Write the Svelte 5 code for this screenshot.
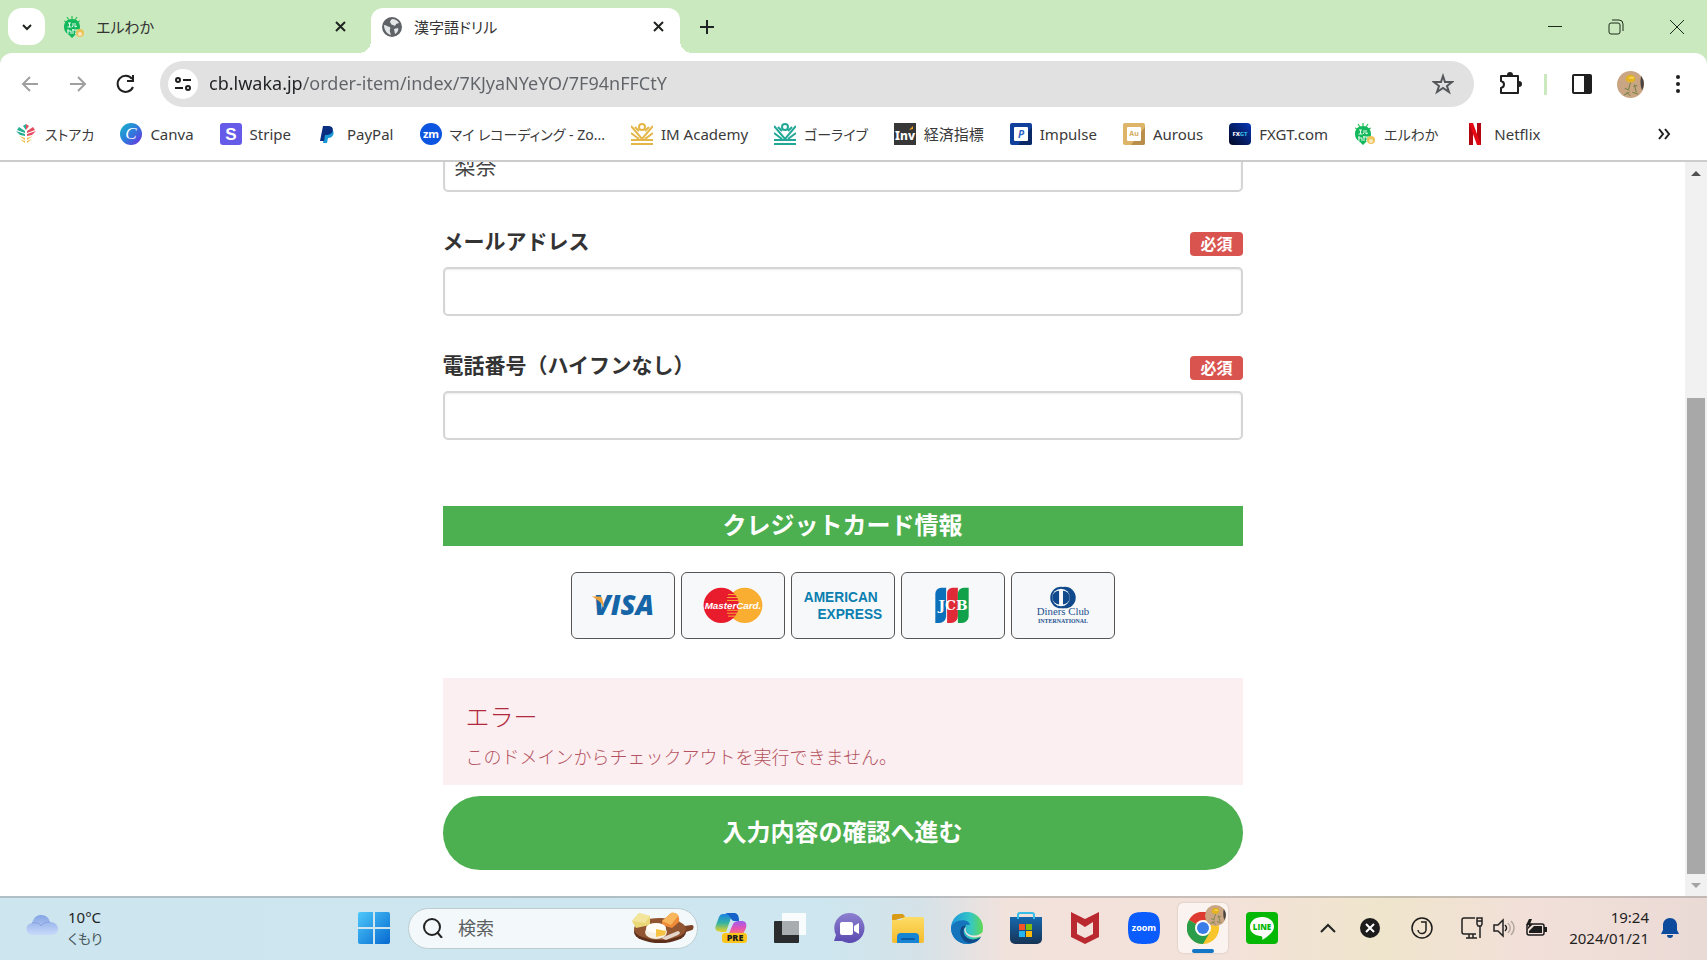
<script lang="ts">
	const tabs = [
		{ title: 'エルわか', icon: 'lwaka', active: false },
		{ title: '漢字語ドリル', icon: 'globe', active: true }
	];

	const bookmarks = [
		{ label: 'ストアカ', icon: 'street', kana: true },
		{ label: 'Canva', icon: 'canva' },
		{ label: 'Stripe', icon: 'stripe' },
		{ label: 'PayPal', icon: 'paypal' },
		{ label: 'マイ レコーディング - Zo...', icon: 'zm', kana: true },
		{ label: 'IM Academy', icon: 'crown-gold' },
		{ label: 'ゴーライブ', icon: 'crown-teal', kana: true },
		{ label: '経済指標', icon: 'inv' },
		{ label: 'Impulse', icon: 'impulse' },
		{ label: 'Aurous', icon: 'aurous' },
		{ label: 'FXGT.com', icon: 'fxgt' },
		{ label: 'エルわか', icon: 'lwaka', kana: true },
		{ label: 'Netflix', icon: 'netflix' }
	];

	const apps = [
		{ name: 'Copilot', icon: 'copilot' },
		{ name: 'タスク ビュー', icon: 'taskview' },
		{ name: 'チャット', icon: 'chat' },
		{ name: 'エクスプローラー', icon: 'folder' },
		{ name: 'Edge', icon: 'edge' },
		{ name: 'Microsoft Store', icon: 'store' },
		{ name: 'McAfee', icon: 'mcafee' },
		{ name: 'Zoom', icon: 'zoom' },
		{ name: 'Chrome', icon: 'chrome', active: true },
		{ name: 'LINE', icon: 'line' }
	];

	const cards = ['visa', 'mastercard', 'amex', 'jcb', 'diners'];

	let firstName = $state('梨奈');
	let fields = $state([
		{ id: 'email', label: 'メールアドレス', type: 'email', value: '' },
		{ id: 'tel', label: '電話番号（ハイフンなし）', type: 'tel', value: '' }
	]);

	let url = $state('cb.lwaka.jp/order-item/index/7KJyaNYeYO/7F94nFFCtY');
	let query = $state('');
</script>

{#snippet favicon(name: string)}
	<svg class="favicon" viewBox="0 0 22 22" aria-hidden="true">
		{#if name === 'lwaka'}
			<path d="M4 1l2 3M9 0v3M14 1l-2 3M1 5l3 1M17 5l-3 1" stroke="#35c45e" stroke-width="1.3" />
			<path d="M9 3c5 0 8 3 8 8 0 4-3 6-5 8l-3 3-3-3c-3-2-5-4-5-8 0-5 3-8 8-8z" fill="#12b85b" />
			<path d="M5 7h3M6.500 7v4M4.500 11h4M10 7v3l-1 1M12 7v4l2-1M5 13v5M4 15h4v3M10 13v5M9 14h4v3l-1 1M14 13v2" fill="none" stroke="#e6faec" />
			<circle cx="17" cy="17" r="4" fill="#edc45a" />
			<circle cx="17" cy="18" r="2" fill="#f9e7bd" />
		{:else if name === 'globe'}
			<circle cx="11" cy="11" r="10" fill="#5f6368" />
			<path d="M3 9c2 0 4 2 6 2 1 2-1 3 0 5l1 3c-4-1-7-5-7-10zM11 3c3 0 5 1 7 4l-3 1c0 2-2 2-3 1-2 0-2-2-3-3 0-1 1-2 2-3zM13 13l4-1c1 2-1 5-3 6z" fill="#e4e6e8" />
		{:else if name === 'street'}
			<path d="M1 8l9 3v2L5 12zM4 4l6 4v2L2 7z" fill="#25ae93" />
			<path d="M21 8l-9 3v2l5-1zM18 4l-6 4v2l8-3z" fill="#e44d60" />
			<path d="M4 13l6 2v2zM18 13l-6 2v2zM5 16l5 2v2zM17 16l-5 2v2z" fill="#efba45" />
			<path d="M11 1l3 2-3 4z" fill="#e44d60" />
			<path d="M11 1L8 3l3 4z" fill="#25ae93" />
		{:else if name === 'canva'}
			<circle cx="11" cy="11" r="11" fill="url(#canvaFill)" />
			<text x="11" y="16" class="serif" font-size="17" font-style="italic" fill="#fff" text-anchor="middle">C</text>
		{:else if name === 'stripe'}
			<rect width="22" height="22" rx="3" fill="#665be8" />
			<text x="11" y="17" class="arial" font-size="17" font-weight="700" fill="#fff" text-anchor="middle">S</text>
		{:else if name === 'paypal'}
			<path d="M8 7h7c3 1 2 8-4 8l-1 5H6z" fill="#1998d8" />
			<path d="M6 3h6c6 0 5 9-2 9H8l-1 6H3z" fill="#0b2f80" />
		{:else if name === 'zm'}
			<circle cx="11" cy="11" r="11" fill="#0b55e0" />
			<text x="11" y="15" font-size="11" font-weight="700" fill="#fff" text-anchor="middle">zm</text>
		{:else if name.startsWith('crown')}
			<g fill="none" stroke={name === 'crown-gold' ? '#e4b647' : '#22a797'} stroke-width="2">
				<path d="M0 17h22M0 21h22" />
				<path d="M0 10l8 6M22 10l-8 6M0 3l11 13L22 3M4 4l4 4M18 4l-4 4" />
				<circle cx="11" cy="4" r="3" />
			</g>
		{:else if name === 'inv'}
			<rect width="22" height="22" fill="#373737" />
			<text x="11" y="17" font-size="12" font-weight="800" fill="#fff" text-anchor="middle">Inv</text>
			<path d="M15 7l4-4v3z" fill="#f6a318" />
		{:else if name === 'impulse'}
			<rect width="22" height="22" rx="2" fill="#103f9c" />
			<path d="M22 4v16a2 2 0 0 1-2 2H8z" fill="#0b2867" />
			<rect x="4" y="4" width="14" height="14" rx="1" fill="#fff" />
			<text x="11" y="15" font-size="10" font-style="italic" font-weight="700" fill="#2c62c4" text-anchor="middle">P</text>
		{:else if name === 'aurous'}
			<rect width="22" height="22" rx="2" fill="#dcb568" />
			<path d="M22 4v16a2 2 0 0 1-2 2H8z" fill="#b98e4a" />
			<rect x="4" y="4" width="14" height="14" rx="1" fill="#fff" />
			<text x="11" y="13" font-size="7" font-weight="700" fill="#d2ad62" text-anchor="middle">Au</text>
		{:else if name === 'fxgt'}
			<rect width="22" height="22" rx="4" fill="url(#fxgtFill)" />
			<text x="11" y="13" font-size="6" font-weight="800" fill="#fff" text-anchor="middle">FX<tspan fill="#30b7df">GT</tspan></text>
		{:else if name === 'netflix'}
			<path d="M5 0h4v22H5zM13 0h4v22h-4z" fill="#b20710" />
			<path d="M5 0h4l8 22h-4z" fill="#e50914" />
		{/if}
	</svg>
{/snippet}

{#snippet appIcon(name: string)}
	<svg width="32" height="32" viewBox="0 0 32 32" aria-hidden="true">
		{#if name === 'copilot'}
			<path d="M8 2h11c3 0 4 2 5 6l-8-2-5 14H6c-4 0-7-2-5-7L4 5c1-2 2-3 4-3z" fill="url(#coLeft)" />
			<path d="M24 9h3c4 0 5 3 4 7l-3 6c-1 2-2 2-4 2H10c3 0 4-2 5-5l3-7c1-2 3-3 6-3z" fill="url(#coRight)" />
			<path d="M10 1h9c3 0 5 2 5 8h-5c-3 0-4-7-9-8z" fill="#1762c8" />
			<rect x="7" y="21" width="25" height="10" rx="3" fill="#fcc51d" />
			<text x="20" y="29" font-size="9" font-weight="800" fill="#1c1c1c" text-anchor="middle">PRE</text>
		{:else if name === 'taskview'}
			<rect x="0" y="9" width="25" height="22" rx="1" fill="#2a2c2e" />
			<rect x="8" y="1" width="24" height="22" rx="1" fill="#fff" opacity="0.85" />
			<rect x="8" y="9" width="17" height="14" fill="#a8adb0" />
		{:else if name === 'chat'}
			<path d="M16 1a15 15 0 1 1-7 28H1l2-6A15 15 0 0 1 16 1z" fill="url(#chatFill)" />
			<rect x="7" y="10" width="13" height="13" rx="2" fill="#fff" />
			<path d="M21 14l5-3v11l-5-3z" fill="#fff" />
		{:else if name === 'folder'}
			<path d="M0 4a2 2 0 0 1 2-2h9l3 4h-4L0 9z" fill="#d99a16" />
			<path d="M0 8h9l3-3h18a2 2 0 0 1 2 2v22a2 2 0 0 1-2 2H2a2 2 0 0 1-2-2z" fill="url(#folderFill)" />
			<path d="M5 31v-6a4 4 0 0 1 4-4h14a4 4 0 0 1 4 4v6z" fill="#1784d4" />
			<path d="M10 27h12" stroke="#0b5ca4" stroke-width="2" stroke-linecap="round" />
		{:else if name === 'edge'}
			<circle cx="16" cy="16" r="16" fill="url(#edgeFill)" />
			<path d="M0 16c1-8 17-11 19-3-7-2-10 5-7 10 3 6 11 7 18 2-3 5-8 7-14 7C7 32 0 25 0 16z" fill="#1674bd" />
			<path d="M10 16c-3 8 3 16 11 15 4-1 7-3 9-6-7 4-14 3-17-3-1-3 0-6 2-8-2-1-4 0-5 2z" fill="#104b89" />
			<path d="M15 15c-3 8 10 12 17 5l-2 4c-7 3-14 1-16-4-1-2-1-4 1-5z" fill="#f5e3db" />
		{:else if name === 'store'}
			<path d="M8 7V3a2 2 0 0 1 2-2h12a2 2 0 0 1 2 2v4" fill="none" stroke="#36bde8" stroke-width="2" />
			<path d="M0 5h32v22a5 5 0 0 1-5 5H5a5 5 0 0 1-5-5z" fill="url(#storeFill)" />
			<path d="M8 7V5M24 7V5" stroke="#36bde8" stroke-width="2" />
			<path d="M9 12h6v6H9z" fill="#f35325" />
			<path d="M16 12h6v6h-6z" fill="#81bc06" />
			<path d="M9 19h6v6H9z" fill="#25b5f0" />
			<path d="M16 19h6v6h-6z" fill="#ffba08" />
		{:else if name === 'mcafee'}
			<path d="M2 0l14 7 14-7v25l-14 7-14-7zM8 10v12l8 4 8-4V10l-8 5z" fill="#b9292f" fill-rule="evenodd" />
		{:else if name === 'zoom'}
			<path d="M16 0c13 0 16 3 16 16s-3 16-16 16S0 29 0 16 3 0 16 0z" fill="#0b5cff" />
			<text x="16" y="19" font-size="9" font-weight="700" fill="#fff" text-anchor="middle">zoom</text>
		{:else if name === 'chrome'}
			<circle cx="16" cy="16" r="16" fill="#f8c62c" />
			<path d="M16 16L2 8a16 16 0 0 1 28 0H16z" fill="#df3a31" />
			<path d="M2 8a16 16 0 0 0 14 24l7-12-7-4z" fill="#2a9d4b" />
			<circle cx="16" cy="16" r="8" fill="#fff" />
			<circle cx="16" cy="16" r="6" fill="#3b7de8" />
		{:else if name === 'line'}
			<rect width="32" height="32" rx="4" fill="#06b806" />
			<path d="M16 5c7 0 12 4 12 10 0 5-7 10-12 13 1-3 0-4-2-4C8 23 4 20 4 15 4 9 9 5 16 5z" fill="#fff" />
			<text x="16" y="18" font-size="8" font-weight="800" fill="#06b806" text-anchor="middle">LINE</text>
		{/if}
	</svg>
{/snippet}

{#snippet avatar(size: number)}
	<svg width={size} height={size} viewBox="0 0 28 28" aria-hidden="true">
		<circle cx="14" cy="14" r="14" fill="#c9a583" />
		<path d="M25 5a14 14 0 0 1 1 15c-2-4-2-10-1-15z" fill="#4b4542" />
		<ellipse cx="14" cy="8" rx="5" ry="4" fill="#e3b322" />
		<ellipse cx="15" cy="7" rx="3" ry="1" fill="#f6d655" />
		<path d="M14 12l-2 7M18 14l2 8M8 18l5 2M7 25l6-3M16 22l6 2M10 22l4 4M17 16l4-1" stroke="#6d7f42" />
	</svg>
{/snippet}

{#snippet closeIcon()}
	<svg width="18" height="18" viewBox="0 0 18 18" aria-hidden="true">
		<path d="M5 4l9 9M14 4l-9 9" stroke="#1f2420" stroke-width="2" />
	</svg>
{/snippet}

{#snippet cardLogo(name: string)}
	<svg viewBox="0 0 104 66" role="img" aria-label={name}>
		{#if name === 'visa'}
			<text x="53" y="43" font-size="28" font-weight="800" font-style="italic" fill="#1565a7" text-anchor="middle">VISA</text>
			<path d="M20 24h8c2 0 3 1 3 3l2 9c-3-6-7-9-13-12z" fill="#e9a23a" />
		{:else if name === 'mastercard'}
			<circle cx="64" cy="33" r="18" fill="#f9ae32" />
			<circle cx="40" cy="33" r="18" fill="#e91c2e" />
			<path d="M47 22h9M46 25h11M46 28h12M46 38h12M46 41h11M47 44h9" stroke="#f9ae32" />
			<text x="52" y="37" class="arial" font-size="10" font-weight="700" font-style="italic" fill="#fff" text-anchor="middle">MasterCard.</text>
		{:else if name === 'amex'}
			<g class="arial" font-size="14" font-weight="700" fill="#0b7fb0">
				<text x="12" y="30">AMERICAN</text>
				<text x="92" y="47" text-anchor="end">EXPRESS</text>
			</g>
		{:else if name === 'jcb'}
			<path d="M40 15h5v29a7 7 0 0 1-7 7h-4V21a6 6 0 0 1 6-6z" fill="#0b6fba" />
			<path d="M51 15h6v29a7 7 0 0 1-7 7h-4V21a6 6 0 0 1 5-6z" fill="#e02a37" />
			<path d="M63 15h5v29a7 7 0 0 1-7 7h-4V21a6 6 0 0 1 6-6z" fill="#12a14b" />
			<text x="52" y="38" class="slab" font-size="14" font-weight="700" fill="#fff" text-anchor="middle">JCB</text>
		{:else}
			<circle cx="54" cy="25" r="11" fill="#114a8c" />
			<circle cx="50" cy="25" r="11" fill="#114a8c" />
			<circle cx="50" cy="25" r="9" fill="#f7f8f9" />
			<path d="M48 18v14a7 7 0 0 1 0-14zM52 18v14a7 7 0 0 0 0-14z" fill="#114a8c" />
			<g class="serif" fill="#1d518f" text-anchor="middle">
				<text x="52" y="43" font-size="11">Diners Club</text>
				<text x="52" y="51" font-size="6" font-weight="700">INTERNATIONAL</text>
			</g>
		{/if}
	</svg>
{/snippet}

<svg class="defs" aria-hidden="true">
	<defs>
		<linearGradient id="canvaFill" x1="0" y1="0" x2="1" y2="1">
			<stop offset="0" stop-color="#17b8c8" />
			<stop offset="0.5" stop-color="#2e7bdc" />
			<stop offset="1" stop-color="#6f2be0" />
		</linearGradient>
		<linearGradient id="fxgtFill" x1="1" y1="0" x2="0" y2="1">
			<stop offset="0" stop-color="#0737b8" />
			<stop offset="1" stop-color="#02081f" />
		</linearGradient>
		<linearGradient id="coLeft" x1="0" y1="0" x2="0" y2="1">
			<stop offset="0" stop-color="#1a83e2" />
			<stop offset="0.5" stop-color="#35b3a1" />
			<stop offset="1" stop-color="#f0d321" />
		</linearGradient>
		<linearGradient id="coRight" x1="0" y1="0" x2="0" y2="1">
			<stop offset="0" stop-color="#9b5cf0" />
			<stop offset="0.5" stop-color="#e753b0" />
			<stop offset="1" stop-color="#fb8c5b" />
		</linearGradient>
		<linearGradient id="chatFill" x1="0" y1="0" x2="0" y2="1">
			<stop offset="0" stop-color="#8d80cf" />
			<stop offset="1" stop-color="#5a49b0" />
		</linearGradient>
		<linearGradient id="folderFill" x1="0" y1="0" x2="0" y2="1">
			<stop offset="0" stop-color="#fddc65" />
			<stop offset="1" stop-color="#f5bb2d" />
		</linearGradient>
		<linearGradient id="edgeFill" x1="0" y1="0" x2="1" y2="0">
			<stop offset="0" stop-color="#1b97dc" />
			<stop offset="0.6" stop-color="#36c6c6" />
			<stop offset="1" stop-color="#5fd854" />
		</linearGradient>
		<linearGradient id="storeFill" x1="0" y1="0" x2="0" y2="1">
			<stop offset="0" stop-color="#1667ad" />
			<stop offset="1" stop-color="#173456" />
		</linearGradient>
		<linearGradient id="winFill" x1="0" y1="0" x2="1" y2="1">
			<stop offset="0" stop-color="#4dc9fb" />
			<stop offset="1" stop-color="#0669d0" />
		</linearGradient>
		<linearGradient id="cloudFill" x1="0" y1="0" x2="0" y2="1">
			<stop offset="0" stop-color="#84a4e4" />
			<stop offset="1" stop-color="#c9dafa" />
		</linearGradient>
	</defs>
</svg>

<div class="screen">
	<header class="browser">
		<div class="tabstrip">
			<button type="button" class="tab-search" aria-label="タブを検索">
				<svg width="14" height="14" viewBox="0 0 14 14" aria-hidden="true">
					<path d="M3 5l4 4 4-4" fill="none" stroke="#1f2420" stroke-width="2" />
				</svg>
			</button>
			{#each tabs as tab (tab.title)}
				<div class="tab" class:active={tab.active}>
					{@render favicon(tab.icon)}
					<span class="tab-title">{tab.title}</span>
					<button type="button" class="tab-close" aria-label="閉じる">{@render closeIcon()}</button>
				</div>
			{/each}
			<button type="button" class="new-tab" aria-label="新しいタブ">
				<svg width="18" height="18" viewBox="0 0 18 18" aria-hidden="true">
					<path d="M9 2v14M2 9h14" stroke="#1f2420" stroke-width="2" />
				</svg>
			</button>
			<div class="window-controls">
				<button type="button" aria-label="最小化">
					<svg width="14" height="14" viewBox="0 0 14 14" aria-hidden="true"><path d="M0 6.500h14" stroke="#1c2a1a" /></svg>
				</button>
				<button type="button" aria-label="元に戻す">
					<svg width="16" height="16" viewBox="0 0 16 16" fill="none" stroke="#1c2a1a" aria-hidden="true">
						<rect x="1" y="4" width="11" height="11" rx="2" />
						<path d="M4 1h7a4 4 0 0 1 4 4v7" />
					</svg>
				</button>
				<button type="button" aria-label="閉じる">
					<svg width="14" height="14" viewBox="0 0 14 14" aria-hidden="true"><path d="M0 0l14 14M14 0L0 14" stroke="#1c2a1a" /></svg>
				</button>
			</div>
		</div>

		<div class="toolbar">
			<nav class="nav-buttons">
				<button type="button" aria-label="戻る">
					<svg width="20" height="20" viewBox="0 0 20 20" fill="none" stroke="#a0a0a0" stroke-width="2" aria-hidden="true"><path d="M18 10H3M10 3l-7 7 7 7" /></svg>
				</button>
				<button type="button" aria-label="進む">
					<svg width="20" height="20" viewBox="0 0 20 20" fill="none" stroke="#a0a0a0" stroke-width="2" aria-hidden="true"><path d="M2 10h15M10 3l7 7-7 7" /></svg>
				</button>
				<button type="button" aria-label="再読み込み">
					<svg width="20" height="20" viewBox="0 0 20 20" fill="none" stroke="#1f1f1f" stroke-width="2" aria-hidden="true">
						<path d="M16 5a8 8 0 1 0 1 8" />
						<path d="M17 1v6h-6" />
					</svg>
				</button>
			</nav>
			<div class="omnibox">
				<button type="button" class="site-info" aria-label="サイト情報を表示">
					<svg width="18" height="18" viewBox="0 0 18 18" fill="none" stroke="#1f1f1f" stroke-width="2" aria-hidden="true">
						<circle cx="4" cy="5" r="2" /><path d="M9 5h8M1 13h8" /><circle cx="14" cy="13" r="2" />
					</svg>
				</button>
				<input class="url" type="text" aria-label="アドレス" bind:value={url} />
				<button type="button" aria-label="ブックマークに追加">
					<svg width="22" height="22" viewBox="0 0 22 22" fill="none" stroke="#55585b" stroke-width="2" aria-hidden="true">
						<path d="M11 3l2 6 7 0-5 4 2 6-6-4-6 4 2-6-5-4 7 0z" />
					</svg>
				</button>
			</div>
			<div class="tools">
				<button type="button" aria-label="拡張機能">
					<svg width="24" height="24" viewBox="0 0 24 24" aria-hidden="true">
						<path d="M3 4h17v17H3v-5c4-1 4-6 0-7z" fill="none" stroke="#1f1f1f" stroke-width="2" stroke-linejoin="round" />
						<path d="M9 3a3 3 0 0 1 6 0zM21 9a3 3 0 0 1 0 6z" fill="#1f1f1f" />
					</svg>
				</button>
				<span class="divider"></span>
				<button type="button" aria-label="サイドパネル">
					<svg width="20" height="20" viewBox="0 0 20 20" aria-hidden="true">
						<rect x="1" y="1" width="18" height="18" rx="1" fill="none" stroke="#1f1f1f" stroke-width="2" />
						<path d="M12 1h7v18h-7z" fill="#1f1f1f" />
					</svg>
				</button>
				<button type="button" class="profile" aria-label="プロフィール">{@render avatar(27)}</button>
				<button type="button" aria-label="メニュー">
					<svg width="20" height="20" viewBox="0 0 20 20" fill="#1f1f1f" aria-hidden="true">
						<circle cx="10" cy="3" r="2" /><circle cx="10" cy="10" r="2" /><circle cx="10" cy="17" r="2" />
					</svg>
				</button>
			</div>
		</div>

		<nav class="bookmarks" aria-label="ブックマーク">
			{#each bookmarks as bookmark (bookmark.icon)}
				<a href="#{bookmark.icon}" class:kana={bookmark.kana}>
					{@render favicon(bookmark.icon)}
					<span>{bookmark.label}</span>
				</a>
			{/each}
			<button type="button" class="more" aria-label="その他のブックマーク">
				<svg width="14" height="14" viewBox="0 0 14 14" fill="none" stroke="#1f1f1f" stroke-width="2" aria-hidden="true">
					<path d="M2 2l4 5-4 5M8 2l4 5-4 5" />
				</svg>
			</button>
		</nav>
	</header>

	<div class="viewport">
		<main class="page">
			<form class="order" onsubmit={(e) => e.preventDefault()}>
				<div class="field">
					<input type="text" aria-label="名" bind:value={firstName} />
				</div>
				{#each fields as field (field.id)}
					<div class="field">
						<div class="field-head">
							<label for={field.id}>{field.label}</label>
							<span class="required">必須</span>
						</div>
						<input id={field.id} type={field.type} bind:value={field.value} />
					</div>
				{/each}

				<h2>クレジットカード情報</h2>
				<ul class="cards">
					{#each cards as card (card)}
						<li>{@render cardLogo(card)}</li>
					{/each}
				</ul>

				<div class="error" role="alert">
					<p class="error-title">エラー</p>
					<p class="error-text">このドメインからチェックアウトを実行できません。</p>
				</div>
				<button type="submit" class="submit">入力内容の確認へ進む</button>
			</form>
		</main>
		<div class="scrollbar">
			<svg width="22" height="22" viewBox="0 0 22 22" aria-hidden="true"><path d="M6 14l5-5 5 5z" fill="#505050" /></svg>
			<div class="track"><div class="thumb"></div></div>
			<svg width="22" height="22" viewBox="0 0 22 22" aria-hidden="true"><path d="M6 9l5 5 5-5z" fill="#a3a3a3" /></svg>
		</div>
	</div>

	<footer class="taskbar">
		<div class="weather">
			<svg width="32" height="28" viewBox="0 0 32 28" aria-hidden="true">
				<path d="M7 21a6 6 0 0 1-1-12C8 3 11 1 15 1c5 0 8 3 9 7 5 0 8 3 8 7 0 3-3 6-6 6z" fill="url(#cloudFill)" />
				<path d="M6 9c4-1 7 0 9 3 2-3 5-4 9-4" fill="none" stroke="#86a0e0" />
			</svg>
			<div>
				<div>10°C</div>
				<div class="condition">くもり</div>
			</div>
		</div>

		<button type="button" class="start" aria-label="スタート">
			<svg width="32" height="32" viewBox="0 0 32 32" aria-hidden="true">
				<path d="M2 0h13v15H0V2a2 2 0 0 1 2-2zM17 0h13a2 2 0 0 1 2 2v13H17zM0 17h15v15H2a2 2 0 0 1-2-2zM17 17h15v13a2 2 0 0 1-2 2H17z" fill="url(#winFill)" />
			</svg>
		</button>
		<label class="search">
			<svg width="20" height="20" viewBox="0 0 20 20" fill="none" stroke="#222" stroke-width="2" aria-hidden="true">
				<circle cx="9" cy="9" r="8" /><path d="M14 14l5 6" />
			</svg>
			<input type="text" placeholder="検索" bind:value={query} />
			<svg width="62" height="32" viewBox="0 0 62 32" aria-hidden="true">
				<path d="M52 14l8-1c2 0 2 4 0 5l-9 3z" fill="#7b4226" />
				<ellipse cx="28" cy="20" rx="26" ry="11" fill="#5e2f1b" />
				<ellipse cx="28" cy="17" rx="26" ry="11" fill="#925532" />
				<path d="M0 9l7-8 11 3v9L4 16z" fill="#ead878" />
				<path d="M0 9l13 2 5-7-11-3z" fill="#f3e69c" />
				<path d="M30 9l9-8c6-1 9 3 8 9l-7 6-10-3z" fill="#ee8a38" />
				<path d="M30 9l9-8c4-1 6 0 7 3l-7 9z" fill="#f8b75c" />
				<ellipse cx="24" cy="20" rx="11" ry="7" fill="#f5f0e2" />
				<ellipse cx="24" cy="16" rx="10" ry="5" fill="#fffdf6" />
				<path d="M24 17l10 2-1 4-9 2z" fill="#f5c244" />
				<path d="M29 26l17-7c3 1 2 3 0 4l-12 5z" fill="#e4d6cb" />
			</svg>
		</label>

		<nav class="apps" aria-label="アプリ">
			{#each apps as app (app.name)}
				<button type="button" class:active={app.active} aria-label={app.name}>
					{@render appIcon(app.icon)}
					{#if app.active}
						<span class="badge">{@render avatar(21)}</span>
					{/if}
				</button>
			{/each}
		</nav>

		<div class="tray">
			<svg width="16" height="10" viewBox="0 0 16 10" aria-hidden="true"><path d="M1 9l7-7 7 7" fill="none" stroke="#222" stroke-width="2" /></svg>
			<svg width="20" height="20" viewBox="0 0 20 20" aria-hidden="true">
				<circle cx="10" cy="10" r="10" fill="#1c1c1c" />
				<path d="M6 6l8 8M14 6l-8 8" stroke="#fff" stroke-width="2" />
			</svg>
			<svg class="ime" width="22" height="22" viewBox="0 0 22 22" fill="none" stroke="#1c1c1c" aria-hidden="true">
				<circle cx="11" cy="11" r="10" stroke-width="1.5" />
				<path d="M10 5h5v7a4 4 0 0 1-8 1" stroke-width="1.5" />
			</svg>
			<div class="status">
				<svg width="22" height="22" viewBox="0 0 22 22" fill="none" stroke="#222" stroke-width="1.5" aria-hidden="true">
					<path d="M14 1H3a2 2 0 0 0-2 2v12a2 2 0 0 0 2 2h12M5 21h11M8 17v4M12 17v4M19 9v12M16 1h5v6l-1 2h-3l-1-2zM16 4h5" />
				</svg>
				<svg width="22" height="20" viewBox="0 0 22 20" fill="none" stroke="#222" stroke-width="1.5" aria-hidden="true">
					<path d="M1 7h4l5-5v16l-5-5H1zM12 7c2 2 2 4 0 6" />
					<path d="M15 5c3 3 3 7 0 10M18 3c4 4 4 10 0 14" stroke="#b6a7a3" />
				</svg>
				<svg width="22" height="18" viewBox="0 0 22 18" aria-hidden="true">
					<rect x="2" y="5" width="17" height="11" rx="2" fill="none" stroke="#1c1c1c" stroke-width="1.5" />
					<path d="M9 7h8v7H4v-2zM19 8h3v5h-3zM4 0L1 6h3L2 11l6-6H5l2-5z" fill="#1c1c1c" />
				</svg>
			</div>
			<div class="clock">
				<div>19:24</div>
				<div>2024/01/21</div>
			</div>
			<svg width="18" height="22" viewBox="0 0 18 22" fill="#0b4a9c" aria-hidden="true">
				<path d="M9 1c4 0 7 3 7 7v5l2 4H0l2-4V8c0-4 3-7 7-7zM6 18h6a3 3 0 0 1-6 0z" />
			</svg>
		</div>
	</footer>
</div>

<style>
	:global(body) {
		margin: 0;
		font-family: 'Noto Sans', 'Noto Sans CJK JP', sans-serif;
		color: #333;
	}

	button {
		display: flex;
		align-items: center;
		justify-content: center;
		border: none;
		background: none;
		padding: 0;
		font-family: inherit;
		cursor: pointer;
	}

	svg {
		display: block;
		flex-shrink: 0;
	}

	.serif {
		font-family: 'Liberation Serif', serif;
	}

	.slab {
		font-family: 'DejaVu Serif', serif;
	}

	.arial {
		font-family: 'Liberation Sans', sans-serif;
	}

	.defs {
		position: absolute;
		width: 0;
		height: 0;
	}

	.screen {
		display: flex;
		flex-direction: column;
		height: 100vh;
		overflow: hidden;
		background: #fff;
	}

	/* browser chrome */
	.browser {
		background: #cbe9bf;
		border-bottom: 2px solid #ccc;
	}

	.tabstrip {
		display: flex;
		align-items: center;
		height: 53px;
		padding-left: 8px;
	}

	.tab-search {
		width: 37px;
		height: 37px;
		margin-right: 8px;
		border-radius: 14px;
		background: #fff;
	}

	.favicon {
		width: 22px;
		height: 22px;
	}

	.tab {
		position: relative;
		display: flex;
		align-items: center;
		align-self: flex-end;
		box-sizing: border-box;
		width: 309px;
		height: 45px;
		margin-right: 9px;
		padding: 0 13px 8px 10px;
		gap: 11px;
		font-size: 15px;
		font-feature-settings: 'palt';
	}

	.tab.active {
		background: #fff;
		border-radius: 12px 12px 0 0;
	}

	.tab.active::before,
	.tab.active::after {
		content: '';
		position: absolute;
		bottom: 0;
		width: 12px;
		height: 12px;
	}

	.tab.active::before {
		left: -12px;
		background: radial-gradient(circle at 0 0, transparent 12px, #fff 12px);
	}

	.tab.active::after {
		right: -12px;
		background: radial-gradient(circle at 100% 0, transparent 12px, #fff 12px);
	}

	.tab-title {
		flex: 1;
	}

	.new-tab {
		margin-left: 9px;
	}

	.window-controls {
		display: flex;
		margin-left: auto;
	}

	.window-controls button {
		width: 61px;
		height: 52px;
	}

	.toolbar {
		display: flex;
		align-items: center;
		padding: 8px 19px 0 20px;
		background: #fff;
		border-radius: 12px 12px 0 0;
	}

	.nav-buttons {
		display: flex;
		gap: 28px;
		margin-right: 24px;
	}

	.omnibox {
		display: flex;
		flex: 1;
		align-items: center;
		height: 46px;
		padding: 0 20px 0 8px;
		border-radius: 23px;
		background: #e1e1e1;
	}

	.site-info {
		width: 30px;
		height: 30px;
		margin-right: 11px;
		border-radius: 50%;
		background: #fff;
	}

	/* the host part of the address is darker than the path */
	.url {
		flex: 1;
		border: none;
		padding: 0 0 2px;
		outline: none;
		font-family: inherit;
		font-size: 18px;
		color: transparent;
		background: linear-gradient(to right, #202124 93px, #606367 93px);
		background-clip: text;
		-webkit-background-clip: text;
	}

	.tools {
		display: flex;
		align-items: center;
		margin-left: 24px;
	}

	.divider {
		width: 3px;
		height: 21px;
		margin: 0 25px 0 22px;
		background: #cbe9bf;
	}

	.profile {
		margin: 0 24px 0 25px;
	}

	.bookmarks {
		display: flex;
		align-items: center;
		height: 53px;
		padding: 0 36px 0 15px;
		gap: 26px;
		background: #fff;
	}

	.bookmarks a {
		display: flex;
		align-items: center;
		gap: 8px;
		font-size: 15px;
		font-feature-settings: 'palt';
		color: #3a3a3a;
		text-decoration: none;
		white-space: nowrap;
	}

	.bookmarks .kana {
		font-size: 14px;
	}

	.more {
		margin-left: auto;
	}

	/* page */
	.viewport {
		display: flex;
		flex: 1;
		min-height: 0;
	}

	/* scrolled to its end */
	.page {
		display: flex;
		flex: 1;
		flex-direction: column;
		justify-content: flex-end;
		align-items: center;
		overflow: hidden;
		padding-bottom: 26px;
	}

	.order {
		width: 100%;
		max-width: 800px;
		font-family: 'Noto Sans CJK JP', sans-serif;
	}

	.field {
		margin-bottom: 34px;
	}

	.field-head {
		display: flex;
		align-items: flex-end;
		justify-content: space-between;
		margin-bottom: 11px;
	}

	.field label {
		padding-bottom: 2px;
		font-size: 21px;
		font-weight: 700;
		line-height: 28px;
	}

	.required {
		padding: 0 10px 2px;
		border-radius: 4px;
		background: #d9534f;
		color: #fff;
		font-size: 16px;
		font-weight: 700;
		line-height: 22px;
	}

	.field input {
		display: block;
		box-sizing: border-box;
		width: 100%;
		height: 49px;
		padding: 0 10px 6px;
		border: 2px solid #d5d5d5;
		border-radius: 5px;
		box-shadow: inset 0 1px 2px rgba(0, 0, 0, 0.08);
		font-family: inherit;
		font-size: 21px;
		color: #444;
	}

	h2 {
		margin: 66px 0 26px;
		padding-bottom: 4px;
		background: #4caf50;
		color: #fff;
		font-size: 24px;
		font-weight: 700;
		line-height: 36px;
		text-align: center;
	}

	.cards {
		display: flex;
		justify-content: center;
		gap: 6px;
		margin: 0 0 39px;
		padding: 0;
		list-style: none;
	}

	.cards li {
		box-sizing: border-box;
		width: 104px;
		border: 1px solid #555;
		border-radius: 6px;
		background: #f7f8f9;
		font-family: 'Open Sans', sans-serif;
	}

	.error {
		margin-bottom: 11px;
		padding: 22px 23px 15px;
		background: #fceff1;
		font-weight: 300;
	}

	.error p {
		margin: 0;
	}

	.error-title {
		font-size: 24px;
		line-height: 32px;
		color: #b02a3c;
	}

	.error .error-text {
		margin-top: 10px;
		font-size: 18px;
		line-height: 28px;
		color: #b4535f;
	}

	.submit {
		width: 100%;
		height: 74px;
		padding-bottom: 6px;
		border-radius: 37px;
		background: #4caf50;
		color: #fff;
		font-size: 24px;
		font-weight: 700;
	}

	.scrollbar {
		display: flex;
		flex-direction: column;
		width: 22px;
		background: #f1f1f1;
	}

	.track {
		display: flex;
		flex: 1;
		align-items: flex-end;
	}

	.thumb {
		width: 18px;
		height: 69%;
		margin: 0 2px;
		background: #a8a8a8;
	}

	/* taskbar */
	.taskbar {
		display: flex;
		align-items: center;
		box-sizing: border-box;
		height: 64px;
		padding: 0 28px 2px 0;
		border-top: 2px solid rgba(120, 120, 120, 0.35);
		background: linear-gradient(to right, #cde5ee 0%, #cde6ef 48%, #d5e2e8 54%, #f2e2dc 59%, #f3e2d9 72%, #efe5cc 81%, #f2dfd9 90%, #eadad5 100%);
		font-size: 15px;
		line-height: 21px;
		color: #1f1f1f;
	}

	.weather {
		display: flex;
		align-items: center;
		box-sizing: border-box;
		width: 358px;
		padding-left: 26px;
		gap: 10px;
	}

	.condition {
		font-size: 14px;
		font-feature-settings: 'palt';
		color: #4a5b62;
	}

	.search {
		display: flex;
		align-items: center;
		box-sizing: border-box;
		width: 290px;
		height: 41px;
		margin: 0 8px 0 18px;
		padding: 0 3px 0 14px;
		gap: 15px;
		border: 1px solid #bccdd2;
		border-radius: 21px;
		background: #f3f8fa;
	}

	.search input {
		flex: 1;
		min-width: 0;
		padding: 0;
		border: none;
		outline: none;
		background: none;
		font-family: inherit;
		font-size: 18px;
	}

	.search input::placeholder {
		color: #5a5f62;
	}

	.apps {
		display: flex;
		gap: 9px;
	}

	.apps button {
		position: relative;
		width: 50px;
		height: 50px;
		border-radius: 5px;
		font-family: 'Open Sans', sans-serif;
	}

	.apps .active {
		background: #faf3f0;
		box-shadow: 0 0 2px rgba(0, 0, 0, 0.2);
	}

	.apps .active::after {
		content: '';
		position: absolute;
		bottom: 0;
		left: 14px;
		width: 22px;
		height: 4px;
		border-radius: 2px;
		background: #1476c6;
	}

	.badge {
		position: absolute;
		top: 2px;
		right: 2px;
	}

	.tray {
		display: flex;
		align-items: center;
		margin-left: auto;
	}

	.tray > svg:first-child {
		margin-right: 24px;
	}

	.ime {
		margin: 0 28px 0 31px;
	}

	.status {
		display: flex;
		align-items: center;
		gap: 10px;
	}

	.clock {
		margin: 0 12px 0 22px;
		text-align: right;
	}
</style>
